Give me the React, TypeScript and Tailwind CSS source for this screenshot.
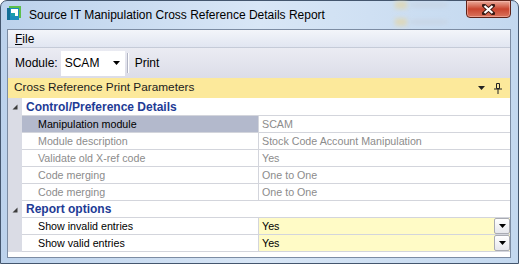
import React from 'react';

type Row =
  | { kind: 'category'; label: string }
  | { kind: 'prop'; label: string; value: string; disabled?: boolean; selected?: boolean; dropdown?: boolean };

const rows: Row[] = [
  { kind: 'category', label: 'Control/Preference Details' },
  { kind: 'prop', label: 'Manipulation module', value: 'SCAM', selected: true },
  { kind: 'prop', label: 'Module description', value: 'Stock Code Account Manipulation', disabled: true },
  { kind: 'prop', label: 'Validate old X-ref code', value: 'Yes', disabled: true },
  { kind: 'prop', label: 'Code merging', value: 'One to One', disabled: true },
  { kind: 'prop', label: 'Code merging', value: 'One to One', disabled: true },
  { kind: 'category', label: 'Report options' },
  { kind: 'prop', label: 'Show invalid entries', value: 'Yes', dropdown: true },
  { kind: 'prop', label: 'Show valid entries', value: 'Yes', dropdown: true },
];

const Expander = () => (
  <svg width="6" height="6" viewBox="0 0 6 6">
    <polygon points="5.5,0.5 5.5,5.5 0.5,5.5" fill="#3c3c3c" />
  </svg>
);

const DownArrow = ({ color = '#000' }: { color?: string }) => (
  <svg width="7" height="4" viewBox="0 0 7 4">
    <polygon points="0,0 7,0 3.5,4" fill={color} />
  </svg>
);

const AppIcon = () => (
  <svg width="16" height="16" viewBox="0 0 16 16">
    <rect x="3" y="1" width="12" height="12" fill="#5cbf4a" />
    <rect x="1" y="3" width="12" height="12" fill="#1b8dbb" />
    <rect x="5" y="4" width="7" height="7" fill="#ffffff" />
    <rect x="5" y="8" width="4" height="3" fill="#1aa0a8" />
    <rect x="1" y="3" width="3" height="12" fill="#136e96" />
  </svg>
);

const App: React.FC = () => {
  return (
    <div className="w-[519px] h-[264px] bg-white overflow-hidden font-['Liberation_Sans',Arial,sans-serif]">
      <div className="relative w-full h-full flex flex-col rounded-t-[7px] border border-[#44566e] bg-gradient-to-r from-[#bcd2ec] via-[#d8e6f6] to-[#c3d8ef]">
        {/* blurred desktop icons behind the glass */}
        <div className="absolute left-[394px] top-[0px] w-[12px] h-[8px] bg-[#e2d6a8] opacity-70 blur-[2px]" />
        <div className="absolute left-[410px] top-[2px] w-[36px] h-[4px] bg-[#c7d1de] opacity-70 blur-[2px]" />
        <div className="absolute left-[394px] top-[17px] w-[12px] h-[8px] bg-[#e2d6a8] opacity-70 blur-[2px]" />
        <div className="absolute left-[410px] top-[19px] w-[36px] h-[4px] bg-[#c7d1de] opacity-70 blur-[2px]" />

        {/* Title bar */}
        <div className="relative h-[28px] flex items-start shrink-0">
          <div className="mt-[4px] ml-[5px]">
            <AppIcon />
          </div>
          <div className="ml-[7px] mt-[7px] text-[12px] leading-[14px] text-black">
            Source IT Manipulation Cross Reference Details Report
          </div>
          <div className="ml-auto mr-[7px] w-[45px] h-[18px] -mt-[1px] rounded-b-[4px] border border-[#5e2319] bg-gradient-to-b from-[#e9aa9b] via-[#c9442e] to-[#d9735c] flex items-center justify-center shadow-[inset_0_0_0_1px_rgba(255,200,190,0.5)]">
            <svg width="13" height="11" viewBox="0 0 13 11">
              <path d="M2 1.5 L11 9.5 M11 1.5 L2 9.5" stroke="#3a1a14" strokeWidth="4" strokeLinecap="square" />
              <path d="M2.5 2 L10.5 9 M10.5 2 L2.5 9" stroke="#ffffff" strokeWidth="2.2" />
            </svg>
          </div>
        </div>

        {/* Client area */}
        <div className="ml-[6px] mr-[7px] h-[229px] border border-[#7c8ca3] bg-white flex flex-col shrink-0">
          {/* Menu */}
          <div className="h-[18px] shrink-0 flex items-center pl-[7px] bg-gradient-to-b from-[#f3f5fa] to-[#e1e6f1] border-b border-[#c5cbd8] text-[12px] text-black">
            <span><span className="underline">F</span>ile</span>
          </div>

          {/* Toolbar */}
          <div className="h-[30px] shrink-0 flex items-center pl-[7px] bg-gradient-to-b from-[#ebecf3] to-[#dcdde8] text-[12px] text-black">
            <span>Module:</span>
            <div className="ml-[3px] w-[64px] h-[25px] bg-white flex items-center pl-[4px] pr-[5px]">
              <span>SCAM</span>
              <span className="ml-auto flex items-center">
                <DownArrow />
              </span>
            </div>
            <div className="ml-[2px] w-[2px] h-[20px] border-l border-[#b2b5c4] border-r border-r-white" />
            <span className="ml-[6px]">Print</span>
          </div>

          {/* Section header */}
          <div className="h-[20px] shrink-0 flex items-center pl-[6px] pr-[8px] bg-[#fce99b] text-[11.8px] text-[#1b1b1b]">
            <span>Cross Reference Print Parameters</span>
            <span className="ml-auto flex items-center">
              <DownArrow color="#222" />
            </span>
            <svg className="ml-[9px]" width="8" height="11" viewBox="0 0 8 11">
              <path d="M2.5 0.5 H5.5 V5.5 H2.5 Z" fill="none" stroke="#222" />
              <path d="M0 6 H8" stroke="#222" />
              <path d="M4 6 V11" stroke="#222" />
            </svg>
          </div>

          {/* Property grid */}
          <div className="flex flex-col shrink-0">
            {rows.map((row, i) =>
              row.kind === 'category' ? (
                <div key={i} className={`flex ${i === 0 ? 'h-[18px]' : 'h-[17px]'}`}>
                  <div className="w-[14px] bg-[#dadce5] flex items-center justify-center">
                    <Expander />
                  </div>
                  <div className="flex-1 border-b border-[#d3d5dc] flex items-center pl-[4px] text-[12px] font-bold text-[#1e3b95]">
                    {row.label}
                  </div>
                </div>
              ) : (
                <div key={i} className="flex h-[17px]">
                  <div className="w-[14px] bg-[#dadce5]" />
                  <div
                    className={`w-[237px] border-b border-r border-[#d3d5dc] flex items-center pl-[16px] text-[10.7px] ${
                      row.selected ? 'bg-[#b3b9cc] text-black' : row.disabled ? 'text-[#8c8c8c]' : 'text-black'
                    }`}
                  >
                    {row.label}
                  </div>
                  <div
                    className={`flex-1 border-b border-[#d3d5dc] flex items-center text-[10.7px] ${
                      row.dropdown ? 'bg-[#fffbc6] text-black' : 'text-[#8c8c8c]'
                    }`}
                  >
                    <span className="pl-[3px]">{row.value}</span>
                    {row.dropdown && (
                      <div className="ml-auto w-[16px] h-full border border-[#a9abb3] rounded-[2px] bg-gradient-to-b from-white to-[#e6e7ec] flex items-center justify-center">
                        <DownArrow />
                      </div>
                    )}
                  </div>
                </div>
              )
            )}
          </div>
          <div className="flex-1 bg-white" />
        </div>
      </div>
    </div>
  );
};

export default App;
